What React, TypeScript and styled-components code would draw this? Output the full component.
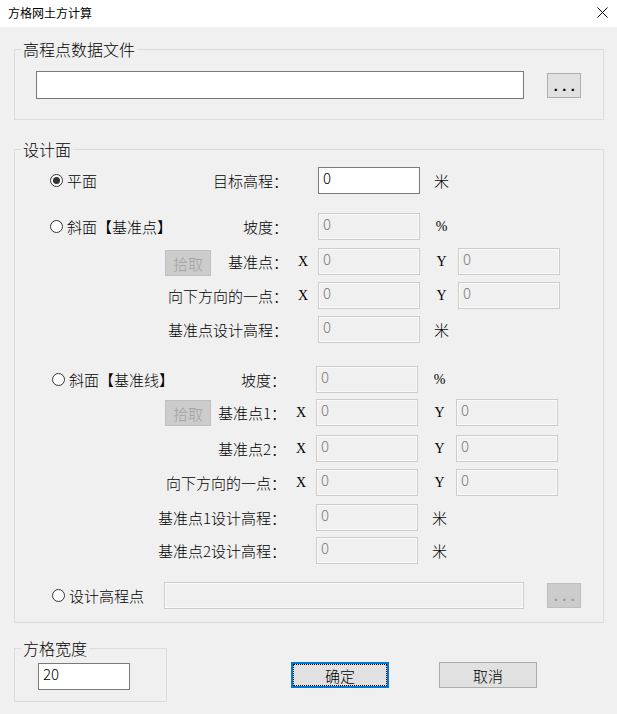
import React from "react";
import styled, { createGlobalStyle } from "styled-components";

const GlobalStyle = createGlobalStyle`
  html, body { margin: 0; padding: 0; background: #f0f0f0; }
  body {
    font-family: "Noto Sans CJK SC", "Noto Sans", sans-serif;
    font-size: 15px;
    font-weight: 300;
    color: #000;
  }
  *, *::before, *::after { box-sizing: border-box; }
`;

const FONT = `"Noto Sans CJK SC", "Noto Sans", sans-serif`;
const MONO = `"Liberation Mono", "DejaVu Sans Mono", monospace`;
const SERIF = `"Liberation Serif", "DejaVu Serif", serif`;

const Window = styled.div`
  width: 617px;
  height: 714px;
  background: #f0f0f0;
  display: flex;
  flex-direction: column;
  overflow: hidden;
`;

const TitleBar = styled.div`
  height: 27px;
  flex: none;
  background: #fff;
  display: flex;
  align-items: center;
  justify-content: space-between;
  padding: 0 9px 2px 8px;
`;

const Title = styled.span`
  font-size: 12px;
  line-height: 14px;
  font-weight: 400;
`;

const Body = styled.div`
  display: flex;
  flex-direction: column;
  padding: 13px 13px 0 14px;
`;

const Group = styled.fieldset<{ $pad: string; $mt?: number; $w?: number }>`
  margin: ${(p) => p.$mt ?? 0}px 0 0 0;
  padding: ${(p) => p.$pad};
  border: 1px solid #dcdcdc;
  min-width: 0;
  width: ${(p) => (p.$w ? `${p.$w}px` : "auto")};
  flex: none;
`;

const Legend = styled.legend<{ $ml: number }>`
  margin-left: ${(p) => p.$ml}px;
  padding: 0 2px;
  font-size: 16px;
  line-height: 19px;
`;

const FileRow = styled.div`
  display: grid;
  grid-template-columns: 1fr 34px;
  column-gap: 23px;
  align-items: center;
`;

const Input = styled.input<{ $h?: number; $w?: number }>`
  display: block;
  width: ${(p) => (p.$w ? `${p.$w}px` : "100%")};
  height: ${(p) => p.$h ?? 27}px;
  margin: 0;
  padding: 1px 4px ${(p) => (p.$h ?? 27) - 20}px;
  font-family: ${FONT};
  font-size: 15px;
  font-weight: 300;
  line-height: 17px;
  border: 1px solid #7a7a7a;
  border-radius: 0;
  background: #fff;
  color: #000;
  outline: none;
  &:disabled {
    border-color: #cccccc;
    background: #f0f0f0;
    color: #7a7a7a;
    -webkit-text-fill-color: #7a7a7a;
    box-shadow: inset 0 0 0 1px #fafafa;
  }
`;

const DotsButton = styled.button<{ $off?: boolean }>`
  width: 34px;
  height: 25px;
  margin: 0;
  padding: 4px 0 0;
  border: 1px solid ${(p) => (p.$off ? "#bfbfbf" : "#adadad")};
  background: ${(p) => (p.$off ? "#cccccc" : "#e1e1e1")};
  color: ${(p) => (p.$off ? "#9a9a9a" : "#000")};
  font-family: ${MONO};
  font-size: 15px;
  font-weight: 700;
  line-height: 17px;
  letter-spacing: -0.5px;
  border-radius: 0;
  display: flex;
  align-items: center;
  justify-content: center;
`;

const Rows = styled.div`
  display: flex;
  flex-direction: column;
`;

const FieldRow = styled.div<{ $mt: number; $left: number }>`
  display: grid;
  grid-template-columns: ${(p) => p.$left}px 30px 102px 38px 102px;
  height: 27px;
  align-items: center;
  margin-top: ${(p) => p.$mt}px;
`;

const LeftCell = styled.div`
  display: flex;
  align-items: center;
  height: 100%;
`;

const Option = styled.label<{ $ml?: number }>`
  display: flex;
  align-items: center;
  gap: 4px;
  margin-left: ${(p) => p.$ml ?? 0}px;
  line-height: 19px;
  white-space: nowrap;
`;

const Radio = styled.span<{ $checked?: boolean }>`
  width: 13px;
  height: 13px;
  flex: none;
  border-radius: 50%;
  border: 1px solid #333;
  background: #fff;
  display: flex;
  align-items: center;
  justify-content: center;
  &::after {
    content: "";
    width: 7px;
    height: 7px;
    border-radius: 50%;
    background: ${(p) => (p.$checked ? "#333" : "transparent")};
  }
`;

const Label = styled.span`
  margin-left: auto;
  line-height: 19px;
  white-space: nowrap;
`;

const PickButton = styled.button<{ $dy: number }>`
  align-self: flex-start;
  margin: ${(p) => p.$dy}px 0 0 115px;
  width: 46px;
  height: 26px;
  padding: 0;
  border: 1px solid #bfbfbf;
  border-radius: 0;
  background: #cccccc;
  color: #a0a0a0;
  font-family: ${FONT};
  font-size: 15px;
  font-weight: 300;
  line-height: 19px;
`;

const Axis = styled.span`
  font-family: ${SERIF};
  font-size: 14px;
  font-weight: 400;
  text-align: center;
  line-height: 19px;
`;

const Unit = styled.span<{ $serif?: boolean }>`
  font-family: ${(p) => (p.$serif ? SERIF : FONT)};
  font-size: ${(p) => (p.$serif ? 14 : 15)}px;
  font-weight: ${(p) => (p.$serif ? 400 : 300)};
  text-align: center;
  padding-left: 5px;
  line-height: 19px;
`;

const PointRow = styled.div`
  display: grid;
  grid-template-columns: 91px 1fr 34px;
  column-gap: 23px;
  align-items: center;
  height: 27px;
  margin-top: 18px;
`;

const BottomRow = styled.div`
  display: flex;
  align-items: flex-start;
  margin-top: 16px;
`;

const DialogButton = styled.button<{ $focus?: boolean; $ml: number }>`
  margin: 23px 0 0 ${(p) => p.$ml}px;
  width: 98px;
  height: 26px;
  padding: 0;
  border: ${(p) => (p.$focus ? "2px solid #0078d7" : "1px solid #adadad")};
  border-radius: 0;
  background: #e1e1e1;
  color: #000;
  font-family: ${FONT};
  font-size: 15px;
  font-weight: 300;
  line-height: 19px;
  outline: ${(p) => (p.$focus ? "1px dotted #000" : "none")};
  outline-offset: -3px;
`;

const CloseIcon = () => (
  <svg width="11" height="11" viewBox="0 0 11 11" aria-label="关闭">
    <path d="M0.5 0.5 L10.5 10.5 M10.5 0.5 L0.5 10.5" stroke="#000" strokeWidth="1" fill="none" />
  </svg>
);

type FieldProps = { value?: string; disabled?: boolean };
const Field = ({ value = "0", disabled }: FieldProps) => (
  <Input defaultValue={value} disabled={disabled} />
);

export default function App() {
  return (
    <>
      <GlobalStyle />
      <Window>
        <TitleBar>
          <Title>方格网土方计算</Title>
          <CloseIcon />
        </TitleBar>
        <Body>
          <Group $pad="12px 22px 20px 21px">
            <Legend $ml={-15}>高程点数据文件</Legend>
            <FileRow>
              <Input $h={28} defaultValue="" />
              <DotsButton>...</DotsButton>
            </FileRow>
          </Group>

          <Group $pad="8px 22px 13px 35px" $mt={20}>
            <Legend $ml={-29}>设计面</Legend>
            <Rows>
              <FieldRow $mt={0} $left={238}>
                <LeftCell>
                  <Option>
                    <Radio $checked />
                    平面
                  </Option>
                  <Label>目标高程：</Label>
                </LeftCell>
                <span />
                <Field />
                <Unit>米</Unit>
              </FieldRow>
              <FieldRow $mt={19} $left={238}>
                <LeftCell>
                  <Option>
                    <Radio />
                    斜面【基准点】
                  </Option>
                  <Label>坡度：</Label>
                </LeftCell>
                <span />
                <Field disabled />
                <Unit $serif>%</Unit>
              </FieldRow>
              <FieldRow $mt={7} $left={238}>
                <LeftCell>
                  <PickButton $dy={3} disabled>拾取</PickButton>
                  <Label>基准点：</Label>
                </LeftCell>
                <Axis>X</Axis>
                <Field disabled />
                <Unit $serif>Y</Unit>
                <Field disabled />
              </FieldRow>
              <FieldRow $mt={8} $left={238}>
                <LeftCell>
                  <Label>向下方向的一点：</Label>
                </LeftCell>
                <Axis>X</Axis>
                <Field disabled />
                <Unit $serif>Y</Unit>
                <Field disabled />
              </FieldRow>
              <FieldRow $mt={7} $left={238}>
                <LeftCell>
                  <Label>基准点设计高程：</Label>
                </LeftCell>
                <span />
                <Field disabled />
                <Unit>米</Unit>
              </FieldRow>

              <FieldRow $mt={23} $left={236}>
                <LeftCell>
                  <Option $ml={2}>
                    <Radio />
                    斜面【基准线】
                  </Option>
                  <Label>坡度：</Label>
                </LeftCell>
                <span />
                <Field disabled />
                <Unit $serif>%</Unit>
              </FieldRow>
              <FieldRow $mt={6} $left={236}>
                <LeftCell>
                  <PickButton $dy={1} disabled>拾取</PickButton>
                  <Label>基准点1：</Label>
                </LeftCell>
                <Axis>X</Axis>
                <Field disabled />
                <Unit $serif>Y</Unit>
                <Field disabled />
              </FieldRow>
              <FieldRow $mt={9} $left={236}>
                <LeftCell>
                  <Label>基准点2：</Label>
                </LeftCell>
                <Axis>X</Axis>
                <Field disabled />
                <Unit $serif>Y</Unit>
                <Field disabled />
              </FieldRow>
              <FieldRow $mt={7} $left={236}>
                <LeftCell>
                  <Label>向下方向的一点：</Label>
                </LeftCell>
                <Axis>X</Axis>
                <Field disabled />
                <Unit $serif>Y</Unit>
                <Field disabled />
              </FieldRow>
              <FieldRow $mt={8} $left={236}>
                <LeftCell>
                  <Label>基准点1设计高程：</Label>
                </LeftCell>
                <span />
                <Field disabled />
                <Unit>米</Unit>
              </FieldRow>
              <FieldRow $mt={6} $left={236}>
                <LeftCell>
                  <Label>基准点2设计高程：</Label>
                </LeftCell>
                <span />
                <Field disabled />
                <Unit>米</Unit>
              </FieldRow>

              <PointRow>
                <Option $ml={2}>
                  <Radio />
                  设计高程点
                </Option>
                <Input disabled defaultValue="" />
                <DotsButton $off>...</DotsButton>
              </PointRow>
            </Rows>
          </Group>

          <BottomRow>
            <Group $pad="5px 0 11px 23px" $w={153}>
              <Legend $ml={-17}>方格宽度</Legend>
              <Input $w={92} defaultValue="20" />
            </Group>
            <DialogButton $focus $ml={124}>确定</DialogButton>
            <DialogButton $ml={50}>取消</DialogButton>
          </BottomRow>
        </Body>
      </Window>
    </>
  );
}
